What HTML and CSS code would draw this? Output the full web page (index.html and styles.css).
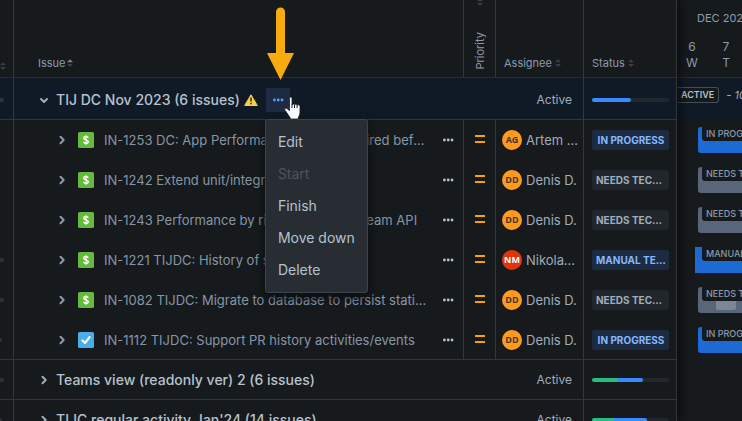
FILE: index.html
```html
<!DOCTYPE html>
<html lang="en">
<head>
<meta charset="utf-8">
<title>Structure board</title>
<link rel="stylesheet" href="styles.css">
</head>
<body>
<svg class="sprite" aria-hidden="true">
  <symbol id="right" viewBox="0 0 24 24"><path d="M10.500 8.800 13.700 12l-3.200 3.200" fill="none" stroke="currentColor" stroke-width="2" stroke-linecap="round" stroke-linejoin="round"/></symbol>
  <symbol id="down" viewBox="0 0 24 24"><path d="M9 11l3 3 3-3" fill="none" stroke="currentColor" stroke-width="2" stroke-linecap="round" stroke-linejoin="round"/></symbol>
  <symbol id="dots" viewBox="0 0 16 16"><circle cx="4.400" cy="8" r="1.400"/><circle cx="8.200" cy="8" r="1.400"/><circle cx="12" cy="8" r="1.400"/></symbol>
  <symbol id="sort" viewBox="0 0 6 8"><path d="M0 3.300 3 .3l3 3z"/><path d="M0 4.900h6L3 7.900z"/></symbol>
  <symbol id="sort-asc" viewBox="0 0 6 8"><path d="M0 3.300 3 .3l3 3z" fill="#7a8794"/><path d="M0 4.900h6L3 7.900z"/></symbol>
  <symbol id="story" viewBox="0 0 16 16"><rect width="16" height="16" rx="1.500" fill="#63ba3c"/><path d="M8 3.200v9.600M10.300 5.900C10 4.900 9.100 4.500 8 4.500c-1.300 0-2.200.6-2.200 1.700 0 2.500 4.500 1 4.500 3.600 0 1.100-1 1.700-2.300 1.700-1.200 0-2.200-.5-2.400-1.600" fill="none" stroke="#fff" stroke-width="1.300"/></symbol>
  <symbol id="task" viewBox="0 0 16 16"><rect width="16" height="16" rx="1.500" fill="#4bade8"/><path d="M4.500 8.500 7 11l4.700-6" fill="none" stroke="#fff" stroke-width="2.100" stroke-linecap="round" stroke-linejoin="round"/></symbol>
  <symbol id="medium" viewBox="0 0 12 10"><path d="M1 2h10M1 8h10" stroke="#f5a300" stroke-width="2"/></symbol>
</svg>

<main class="board">
  <section class="pane">
    <table class="issues">
      <colgroup><col class="c-side"><col><col class="c-priority"><col class="c-assignee"><col class="c-status"></colgroup>
      <thead>
        <tr>
          <th class="side"><span class="head"><svg class="sort"><use href="#sort"/></svg></span></th>
          <th><span class="head head-issue">Issue<svg class="sort"><use href="#sort-asc"/></svg></span></th>
          <th class="head-priority"><span class="vertical"><svg class="sort"><use href="#sort"/></svg><span class="turned">Priority</span></span></th>
          <th><span class="head">Assignee<svg class="sort"><use href="#sort"/></svg></span></th>
          <th><span class="head">Status<svg class="sort"><use href="#sort"/></svg></span></th>
        </tr>
      </thead>
      <tbody>
        <tr class="group selected">
          <td class="side"><i class="dash"></i></td>
          <td colspan="3"><div class="group-line">
            <button class="toggle" aria-label="Collapse"><svg><use href="#down"/></svg></button>
            <span class="group-name">TIJ DC Nov 2023 (6 issues)</span>
            <svg class="warning" viewBox="0 0 14 12"><path d="M7 .8 13.300 11.500H.7z" fill="#f5cd47" stroke="#f5cd47" stroke-linejoin="round"/><path d="M7 3.500v4M7 8.700v1.600" stroke="#4a4120" stroke-width="1.800"/></svg>
            <div class="actions">
              <button class="more-active" aria-label="Sprint actions"><svg><use href="#dots"/></svg></button>
              <div class="menu">
                <button>Edit</button>
                <button disabled>Start</button>
                <button>Finish</button>
                <button>Move down</button>
                <button>Delete</button>
              </div>
              <svg class="pointer-arrow" viewBox="0 0 28 74"><path d="M9 5a4.500 4.500 0 0 1 9 0v41h9L13.500 73 0 46h9z" fill="#f8ab0c"/></svg>
              <svg class="hand" viewBox="0 0 18 24"><path d="M5.500 2.500C5.500.6 8 .6 8 2.500V9c0-1.300 2.500-1.300 2.500.2 0-1.300 2.600-1.200 2.600.4 0-1.200 2.900-1 2.900.9V16c0 3.500-1.500 4-2 7H6.500c-.3-2-1.700-3-2.500-4.500L1 14.200c-1-1.600.8-2.800 2-1.700l2.500 2.200z" fill="#fff" stroke="#111a25" stroke-width=".8"/><path d="M8 8.500V12M10.500 9v3M13.100 9.600V12" stroke="#111a25"/></svg>
            </div>
            <span class="state">Active</span>
          </div></td>
          <td><div class="progress"><i class="doing" style="width:50%"></i></div></td>
        </tr>
        <tr>
          <td class="side"></td>
          <td><div class="issue"><button class="toggle" aria-label="Expand"><svg><use href="#right"/></svg></button><svg class="type"><use href="#story"/></svg><a href="#">IN-1253 DC: App Performance review required before release</a><button class="more" aria-label="Issue actions"><svg><use href="#dots"/></svg></button></div></td>
          <td class="priority"><svg><use href="#medium"/></svg></td>
          <td><div class="person"><span class="avatar">AG</span><span class="name">Artem Gordeev</span></div></td>
          <td><span class="lozenge blue">IN PROGRESS</span></td>
        </tr>
        <tr>
          <td class="side"></td>
          <td><div class="issue"><button class="toggle" aria-label="Expand"><svg><use href="#right"/></svg></button><svg class="type"><use href="#story"/></svg><a href="#">IN-1242 Extend unit/integration tests</a><button class="more" aria-label="Issue actions"><svg><use href="#dots"/></svg></button></div></td>
          <td class="priority"><svg><use href="#medium"/></svg></td>
          <td><div class="person"><span class="avatar">DD</span><span class="name">Denis D.</span></div></td>
          <td><span class="lozenge">NEEDS TECH REVIEW</span></td>
        </tr>
        <tr>
          <td class="side"></td>
          <td><div class="issue"><button class="toggle" aria-label="Expand"><svg><use href="#right"/></svg></button><svg class="type"><use href="#story"/></svg><a href="#">IN-1243 Performance by rich use of the stream API</a><button class="more" aria-label="Issue actions"><svg><use href="#dots"/></svg></button></div></td>
          <td class="priority"><svg><use href="#medium"/></svg></td>
          <td><div class="person"><span class="avatar">DD</span><span class="name">Denis D.</span></div></td>
          <td><span class="lozenge">NEEDS TECH REVIEW</span></td>
        </tr>
        <tr>
          <td class="side"><i class="dash"></i></td>
          <td><div class="issue"><button class="toggle" aria-label="Expand"><svg><use href="#right"/></svg></button><svg class="type"><use href="#story"/></svg><a href="#">IN-1221 TIJDC: History of statuses</a><button class="more" aria-label="Issue actions"><svg><use href="#dots"/></svg></button></div></td>
          <td class="priority"><svg><use href="#medium"/></svg></td>
          <td><div class="person"><span class="avatar red">NM</span><span class="name">Nikolay Mak</span></div></td>
          <td><span class="lozenge blue">MANUAL TESTING</span></td>
        </tr>
        <tr>
          <td class="side"><i class="dash"></i></td>
          <td><div class="issue"><button class="toggle" aria-label="Expand"><svg><use href="#right"/></svg></button><svg class="type"><use href="#story"/></svg><a href="#">IN-1082 TIJDC: Migrate to database to persist statistics</a><button class="more" aria-label="Issue actions"><svg><use href="#dots"/></svg></button></div></td>
          <td class="priority"><svg><use href="#medium"/></svg></td>
          <td><div class="person"><span class="avatar">DD</span><span class="name">Denis D.</span></div></td>
          <td><span class="lozenge">NEEDS TECH REVIEW</span></td>
        </tr>
        <tr class="last">
          <td class="side"><i class="dash short"></i></td>
          <td><div class="issue"><button class="toggle" aria-label="Expand"><svg><use href="#right"/></svg></button><svg class="type"><use href="#task"/></svg><a href="#">IN-1112 TIJDC: Support PR history activities/events</a><button class="more" aria-label="Issue actions"><svg><use href="#dots"/></svg></button></div></td>
          <td class="priority"><svg><use href="#medium"/></svg></td>
          <td><div class="person"><span class="avatar">DD</span><span class="name">Denis D.</span></div></td>
          <td><span class="lozenge blue">IN PROGRESS</span></td>
        </tr>
        <tr class="group">
          <td class="side"><i class="dash"></i></td>
          <td colspan="3"><div class="group-line"><button class="toggle" aria-label="Expand"><svg><use href="#right"/></svg></button><span class="group-name">Teams view (readonly ver) 2 (6 issues)</span><span class="state">Active</span></div></td>
          <td><div class="progress"><i class="done" style="width:33%"></i><i class="doing" style="width:33%"></i></div></td>
        </tr>
        <tr class="group">
          <td class="side"><i class="dash short"></i></td>
          <td colspan="3"><div class="group-line"><button class="toggle" aria-label="Expand"><svg><use href="#right"/></svg></button><span class="group-name">TIJC regular activity Jan'24 (14 issues)</span><span class="state">Active</span></div></td>
          <td><div class="progress"><i class="done" style="width:28%"></i><i class="doing" style="width:43%"></i></div></td>
        </tr>
      </tbody>
    </table>
  </section>

  <section class="timeline">
    <header class="calendar">
      <div class="month">DEC 2023</div>
      <div class="days"><span>6<br>W</span><span>7<br>T</span></div>
    </header>
    <div class="lane sprint"><span class="badge">ACTIVE</span><em>- 10 days</em></div>
    <div class="lane"><div class="bar blue"><span>IN PROGRESS</span></div></div>
    <div class="lane"><div class="bar"><span>NEEDS TECH REVIEW</span></div></div>
    <div class="lane"><div class="bar"><span>NEEDS TECH REVIEW</span></div></div>
    <div class="lane"><div class="bar blue running"><span>MANUAL TESTING</span></div></div>
    <div class="lane"><div class="bar"><span>NEEDS TECH REVIEW</span><i class="part"></i></div></div>
    <div class="lane"><div class="bar blue"><span>IN PROGRESS</span></div></div>
  </section>
</main>
</body>
</html>
```

FILE: styles.css
```css
* { box-sizing: border-box; }

body {
  margin: 0;
  height: 100vh;
  overflow: hidden;
  background: #161a1d;
  color: #9fadbc;
  font: 14px/20px Inter, "Liberation Sans", sans-serif;
}

button {
  margin: 0;
  padding: 0;
  border: 0;
  background: none;
  color: inherit;
  font: inherit;
}

svg { display: block; flex: none; }
.sprite { position: absolute; width: 0; height: 0; }

.board { display: flex; align-items: stretch; height: 100%; }

.pane {
  position: relative;
  z-index: 1;
  flex: 1;
  min-width: 0;
  background: #161a1d;
  box-shadow: 2px 0 10px #08090b;
}

/* Issue table */
.issues {
  width: 100%;
  table-layout: fixed;
  border-collapse: separate;
  border-spacing: 0;
}
.c-side { width: 14px; }
.c-priority { width: 32px; }
.c-assignee { width: 88px; }
.c-status { width: 93px; }

th, td {
  height: 40px;
  padding: 0 7px 0 8px;
  border-right: 1px solid #32373c;
  text-align: left;
  vertical-align: middle;
}
th {
  height: 78px;
  border-bottom: 1px solid #2a2e32;
  vertical-align: bottom;
  color: #8c9bab;
  font-size: 11px;
  font-weight: 400;
  line-height: 14px;
}
th.side, td.side { padding: 0; }
.last td, .group td { border-bottom: 1px solid #32373c; }
td:nth-child(2) { padding-left: 18px; }
td:nth-child(4) { padding: 0 4px 0 6px; }
.group td:nth-child(2) { padding-right: 11px; }
.group td:nth-child(3) { padding: 0 7px 0 8px; }

.selected td { height: 42px; padding-top: 2px; background: #101a26; }
.group.selected td:nth-child(3) { padding-top: 2px; }

.head { display: flex; align-items: center; gap: 3px; padding-bottom: 7px; }
.head-issue { gap: 2px; padding-left: 16px; }
.head-priority { padding: 0; }
.vertical {
  display: flex;
  flex-direction: column;
  align-items: center;
  gap: 26px;
  margin-top: -2px;
  padding-bottom: 7px;
}
.turned { writing-mode: vertical-rl; transform: rotate(180deg); font-size: 11px; }
.sort { width: 6px; height: 8px; fill: #383f47; }

.dash { display: block; width: 4px; height: 4px; border-radius: 0 2px 2px 0; background: #2c333a; }
.dash.short { width: 2px; }

.toggle svg { width: 24px; height: 24px; }

/* Sprint rows */
.group-line { display: flex; align-items: center; }
.group-name { color: #b6c2cf; font-weight: 550; font-size: 14px; white-space: nowrap; }
.warning { width: 14px; height: 12px; margin: 0 8px 0 4px; }
.state { margin-left: auto; font-size: 12px; }

.actions { position: relative; }
.more-active {
  display: flex;
  align-items: center;
  justify-content: center;
  width: 24px;
  height: 24px;
  background: #1c2b41;
  color: #579dff;
}
.more-active svg, .more svg { width: 16px; height: 16px; fill: currentColor; }

.menu {
  position: absolute;
  z-index: 2;
  top: 31px;
  left: -1px;
  display: flex;
  flex-direction: column;
  padding: 6px 0;
  border: 1px solid #3b444c;
  border-radius: 3px;
  background: #282d34;
  box-shadow: 0 4px 10px #0b0d0f;
}
.menu button {
  height: 32px;
  padding: 0 12px;
  color: #b6c2cf;
  font-size: 14px;
  text-align: left;
  white-space: nowrap;
}
.menu button:disabled { color: #4b545e; }

.pointer-arrow { position: absolute; z-index: 3; top: -81px; left: 1px; width: 28px; height: 74px; }
.hand { position: absolute; z-index: 3; top: 8px; left: 18px; width: 18px; height: 24px; }

.progress { display: flex; height: 4px; border-radius: 2px; overflow: hidden; background: #22272d; }
.doing { background: #388bff; }
.done { background: #2abb7f; }
.progress i:last-child { border-radius: 0 2px 2px 0; }

/* Issue rows */
.issue { display: flex; align-items: center; padding-left: 18px; color: #8696a7; }
.type { width: 16px; height: 16px; margin: 0 10px 0 4px; }
.issue a {
  flex: 1;
  min-width: 0;
  overflow: hidden;
  color: inherit;
  font-size: 13px;
  text-decoration: none;
  text-overflow: ellipsis;
  white-space: nowrap;
}
.more { margin-left: 12px; color: #b6c2cf; }
.issue .toggle { color: #8c9bab; }

.priority { padding: 0 0 2px 10px; }
.priority svg { width: 12px; height: 10px; }

.person { display: flex; align-items: center; gap: 4px; }
.avatar {
  flex: none;
  width: 20px;
  border-radius: 50%;
  background: #ff991f;
  color: #42372b;
  font: 700 9px/20px "Open Sans", sans-serif;
  text-align: center;
}
.avatar.red { background: #de350b; color: #fff; }
.name { overflow: hidden; font-size: 13px; text-overflow: ellipsis; white-space: nowrap; }

.lozenge {
  display: block;
  overflow: hidden;
  padding: 0 3px 0 4px;
  border-radius: 3px;
  background: #22272d;
  color: #9fadbc;
  font-size: 10px;
  font-weight: 650;
  text-align: center;
  text-overflow: ellipsis;
  white-space: nowrap;
}
.lozenge.blue { background: #1c2b41; color: #85b8ff; }

/* Timeline */
.timeline { flex: 0 0 65px; min-width: 0; overflow: hidden; }
.calendar {
  height: 78px;
  padding-top: 8px;
  border-bottom: 1px solid #2a2e32;
  color: #8c9bab;
  font-size: 12px;
}
.month { padding-left: 20px; font-size: 11px; white-space: nowrap; }
.days { display: grid; grid-template-columns: 30px 38px; padding-top: 11px; line-height: 16px; text-align: center; }

.lane { height: 40px; padding: 7px 0 0 21px; }
.sprint {
  display: flex;
  align-items: flex-start;
  gap: 7px;
  height: 42px;
  padding: 9px 0 0;
  background: #101a26;
  font-size: 11px;
  line-height: 16px;
  white-space: nowrap;
}
.badge {
  padding: 0 4px;
  border: 1px solid #454f59;
  border-left: 0;
  border-radius: 0 3px 3px 0;
  background: #161a1d;
  color: #b6c2cf;
  font-size: 9px;
  font-weight: 600;
  line-height: 14px;
}
.bar {
  height: 26px;
  padding-left: 4px;
  border-radius: 3px 0 0 3px;
  background: #596579;
}
.bar span {
  display: block;
  overflow: hidden;
  padding-left: 4px;
  border-radius: 0 0 0 3px;
  background: #161a1d;
  color: #8c9bab;
  font-size: 9px;
  font-weight: 500;
  line-height: 14px;
  white-space: nowrap;
}
.bar.blue { background: #1d6ad4; }
.bar.running { margin-left: -3px; padding-left: 7px; border-radius: 0; }
.part { display: block; width: 20px; height: 9px; margin-left: 14px; border-radius: 0 0 2px 2px; background: #7b8797; }
```
